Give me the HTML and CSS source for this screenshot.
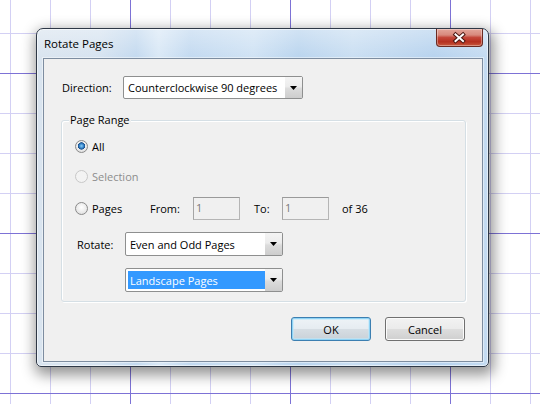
FILE: index.html
```html
<!DOCTYPE html>
<html>
<head>
<meta charset="utf-8">
<title>Rotate Pages</title>
<link rel="stylesheet" href="styles.css">
</head>
<body>
<div class="desktop">
  <div class="window">
    <div class="titlebar">
      <span class="title">Rotate Pages</span>
      <div class="close">
        <svg width="47" height="18" viewBox="0 0 47 18">
          <path d="M19.5 5.5 L27 12 M27 5.5 L19.5 12" stroke="#4a1610" stroke-width="4" stroke-linecap="square" fill="none"/>
          <path d="M19.5 5.5 L27 12 M27 5.5 L19.5 12" stroke="#ffffff" stroke-width="2" stroke-linecap="square" fill="none"/>
        </svg>
      </div>
    </div>
    <div class="client">
      <div class="dir-row">
        <span class="dir-label">Direction:</span>
        <div class="combo combo-dir">
          <span class="combo-text">Counterclockwise 90 degrees</span>
          <span class="combo-btn"><svg width="7" height="4" viewBox="0 0 7 4"><polygon points="0,0 7,0 3.5,4" fill="#000"/></svg></span>
        </div>
      </div>

      <div class="group">
        <span class="group-caption">Page Range</span>
        <div class="row row-all">
          <span class="radio checked"></span><span class="radio-label">All</span>
        </div>
        <div class="row row-sel">
          <span class="radio disabled"></span><span class="radio-label disabled-text">Selection</span>
        </div>
        <div class="row row-pages">
          <span class="pages-item"><span class="radio"></span><span class="radio-label">Pages</span></span>
          <span class="from-label">From:</span>
          <span class="textbox">1</span>
          <span class="to-label">To:</span>
          <span class="textbox">1</span>
          <span class="of-label">of 36</span>
        </div>
        <div class="row row-rotate">
          <span class="rotate-label">Rotate:</span>
          <div class="combo combo-small">
            <span class="combo-text">Even and Odd Pages</span>
            <span class="combo-btn"><svg width="7" height="4" viewBox="0 0 7 4"><polygon points="0,0 7,0 3.5,4" fill="#000"/></svg></span>
          </div>
        </div>
        <div class="row row-land">
          <div class="combo combo-small combo-focus">
            <span class="combo-text"><span class="selected">Landscape Pages</span></span>
            <span class="combo-btn"><svg width="7" height="4" viewBox="0 0 7 4"><polygon points="0,0 7,0 3.5,4" fill="#000"/></svg></span>
          </div>
        </div>
      </div>

      <div class="buttons">
        <button class="btn btn-default">OK</button>
        <button class="btn">Cancel</button>
      </div>
    </div>
  </div>
</div>
</body>
</html>
```

FILE: styles.css
```css
html, body {
  margin: 0;
  padding: 0;
}

body {
  width: 540px;
  height: 404px;
  overflow: hidden;
  font-family: "Open Sans", "Noto Sans", "Liberation Sans", sans-serif;
  font-size: 11px;
  color: #000;
  background-color: #ffffff;
  background-image:
    linear-gradient(to right, #7d72d6 1px, transparent 1px),
    linear-gradient(to bottom, #7d72d6 1px, transparent 1px),
    linear-gradient(to right, #d3d0f4 1px, transparent 1px),
    linear-gradient(to bottom, #d3d0f4 1px, transparent 1px);
  background-size: 160px 100%, 100% 160px, 40px 100%, 100% 40px;
  background-position: 130px 0, 0 73px, 10px 0, 0 33px;
}

.desktop {
  position: relative;
  width: 540px;
  height: 404px;
}

.window {
  position: absolute;
  left: 36px;
  top: 28px;
  width: 453px;
  height: 339px;
  box-sizing: border-box;
  border: 1px solid #2e3846;
  border-radius: 7px 7px 5px 5px;
  padding: 0 5px 4px 6px;
  background:
    linear-gradient(to bottom, rgba(255,255,255,0.35) 0px, rgba(255,255,255,0) 30px),
    linear-gradient(to right, #d9e4ef 0%, #d6e3f0 14%, #c3d9ef 22%, #d9e8f6 27%, #c2d9f0 34%, #cfe2f4 48%, #b9d4ee 58%, #c9def2 70%, #b6d2ee 88%, #c4dbf1 100%);
  box-shadow: inset 0 0 0 1px rgba(255,255,255,0.55), 2px 5px 14px 3px rgba(0,0,0,0.42);
  display: flex;
  flex-direction: column;
}

.titlebar {
  position: relative;
  height: 29px;
  display: flex;
  align-items: center;
  padding-left: 1px;
}

.title {
  font-size: 11.5px;
  color: #000;
  line-height: 16px;
  margin-top: 1px;
}

.close {
  position: absolute;
  top: 0;
  right: 0;
  width: 47px;
  height: 18px;
  box-sizing: border-box;
  border: 1px solid #6a2b22;
  border-top: none;
  border-radius: 0 0 4px 4px;
  background: linear-gradient(to bottom, #e3a59a 0%, #d88a7d 35%, #c4473a 50%, #b5301f 75%, #c85a3e 100%);
  box-shadow: inset 0 0 0 1px rgba(255,255,255,0.35);
}

.close svg {
  display: block;
  position: absolute;
  left: -1px;
  top: 0;
}

.client {
  height: 304px;
  box-sizing: border-box;
  border: 1px solid #7d8da0;
  background: #f0f0f0;
  padding: 17px 16px 0 17px;
  box-shadow: 0 0 0 1px rgba(255,255,255,0.45);
}

.dir-row {
  display: flex;
  align-items: center;
  height: 23px;
}

.dir-label {
  width: 62px;
  padding-left: 1px;
  box-sizing: border-box;
}

.combo {
  display: flex;
  box-sizing: border-box;
  border: 1px solid #8e8f8f;
  border-radius: 2px;
  background: #ffffff;
  align-items: stretch;
}

.combo-dir {
  width: 180px;
  height: 23px;
}

.combo-small {
  width: 158px;
  height: 24px;
}

.combo-text {
  flex: 1;
  display: flex;
  align-items: center;
  padding-left: 4px;
  white-space: nowrap;
  overflow: hidden;
}

.combo-btn {
  width: 17px;
  display: flex;
  align-items: center;
  justify-content: center;
  background: linear-gradient(to bottom, #f4f4f4 0%, #ececec 45%, #dcdcdc 55%, #cdcdcd 100%);
}

.combo-btn svg {
  display: block;
}

.combo-focus .combo-text {
  padding: 2px 0 2px 2px;
}

.selected {
  display: flex;
  align-items: center;
  width: 100%;
  height: 100%;
  background: #3399ff;
  color: #ffffff;
  padding-left: 2px;
  box-sizing: border-box;
}

.group {
  position: relative;
  margin-top: 21px;
  height: 182px;
  box-sizing: border-box;
  border: 1px solid #d5dfe5;
  border-radius: 3px;
  box-shadow: inset 1px 1px 0 #ffffff, 1px 1px 0 #ffffff;
  padding: 0 0 0 13px;
}

.group-caption {
  position: absolute;
  top: -9px;
  left: 7px;
  padding: 0 1px;
  background: #f0f0f0;
  line-height: 16px;
}

.row {
  display: flex;
  align-items: center;
}

.row-all { margin-top: 14px; height: 22px; }
.row-sel { margin-top: 8px; height: 22px; }
.row-pages { margin-top: 10px; height: 23px; }
.row-rotate { margin-top: 12px; height: 24px; }
.row-land { margin-top: 12px; height: 24px; padding-left: 50px; }

.radio {
  width: 13px;
  height: 13px;
  box-sizing: border-box;
  border-radius: 50%;
  border: 1px solid #8a8a8a;
  background: radial-gradient(circle at 50% 40%, #ffffff 0%, #e9e9e9 60%, #d2d2d2 100%);
  flex: none;
}

.radio.checked {
  background:
    radial-gradient(circle at 50% 45%, #8fd0f6 0px, #3a8ad0 2px, #1a4f8a 3.4px, rgba(0,0,0,0) 3.9px),
    radial-gradient(circle at 50% 40%, #ffffff 0%, #e9e9e9 60%, #d2d2d2 100%);
}

.radio.disabled {
  border-color: #c8c8c8;
  background: #f3f3f3;
}

.radio-label {
  margin-left: 4px;
}

.disabled-text {
  color: #8d8d8d;
}

.pages-item {
  display: flex;
  align-items: center;
  width: 75px;
}

.from-label {
  width: 43px;
}

.textbox {
  width: 47px;
  height: 23px;
  box-sizing: border-box;
  border: 1px solid #b5b5b5;
  border-top-color: #9a9a9a;
  border-left-color: #a5a5a5;
  background: #f0f0f0;
  color: #7a7a7a;
  padding: 2px 0 0 2px;
  line-height: 16px;
}

.to-label {
  margin-left: 14px;
  width: 28px;
}

.of-label {
  margin-left: 13px;
}

.rotate-label {
  width: 50px;
  padding-left: 2px;
  box-sizing: border-box;
}

.buttons {
  display: flex;
  justify-content: flex-end;
  gap: 14px;
  margin-top: 15px;
  padding-right: 1px;
}

.btn {
  width: 80px;
  height: 24px;
  box-sizing: border-box;
  border: 1px solid #707070;
  border-radius: 3px;
  background: linear-gradient(to bottom, #f2f2f2 0%, #ebebeb 48%, #dddddd 52%, #cfcfcf 100%);
  box-shadow: inset 0 0 0 1px #fbfbfb;
  font-family: "Open Sans", "Noto Sans", "Liberation Sans", sans-serif;
  font-size: 11px;
  color: #000;
  padding: 0;
}

.btn-default {
  border-color: #3c7fb1;
  background: linear-gradient(to bottom, #eef3f7 0%, #e6ecf1 48%, #d6dde3 52%, #c9d1d8 100%);
  box-shadow: inset 0 0 0 1px #8fd3f5, inset 0 0 0 2px rgba(190,232,250,0.6);
}
```
